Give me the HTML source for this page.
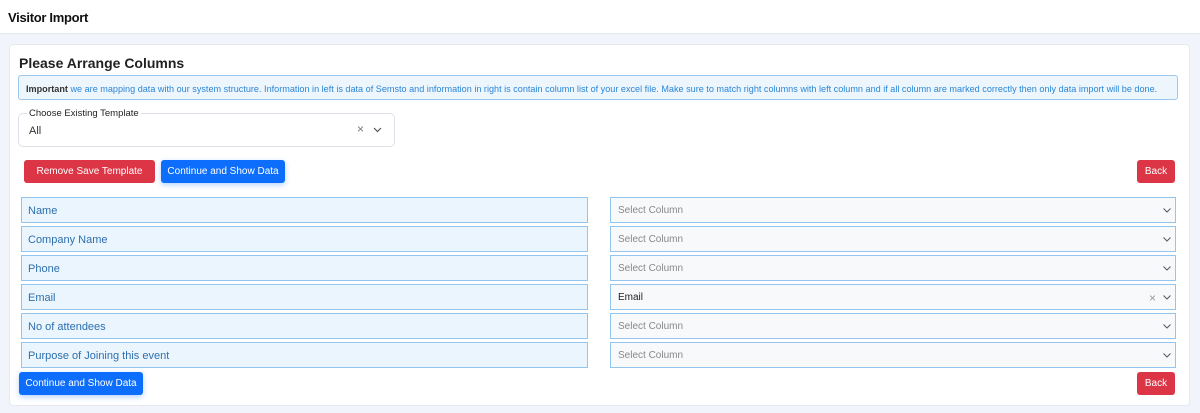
<!DOCTYPE html>
<html><head><style>
*{box-sizing:border-box;margin:0;padding:0}
body{width:1200px;height:413px;background:#f1f4fa;font-family:"Liberation Sans",sans-serif;position:relative;overflow:hidden}
.hdr{position:absolute;left:0;top:0;width:1200px;height:34px;background:#fff;border-bottom:1px solid #e3e8f0}
.hdr span{position:absolute;left:8px;top:10px;font-size:13px;font-weight:bold;color:#111;letter-spacing:-0.3px}
.card{position:absolute;left:9px;top:44px;width:1181px;height:362px;background:#fff;border:1px solid #e6eaf0;border-radius:4px}
.abs{position:absolute}
.title{left:19px;top:55px;font-size:14px;font-weight:bold;color:#222}
.alert{left:18px;top:75px;width:1160px;height:25px;background:#eef6fd;border:1px solid #9cc7ef;border-radius:3px;font-size:9.1px;color:#2a86d6;padding:8px 0 0 7px;white-space:nowrap;overflow:hidden}
.alert b{color:#333}
.tpl{left:18px;top:113px;width:377px;height:34px;border:1px solid #dde2e8;border-radius:5px}
.tpl .lab{position:absolute;left:8px;top:-6px;background:#fff;font-size:9.5px;color:#222;padding:0 2px}
.tpl .v{position:absolute;left:10px;top:11px;font-size:11px;color:#333}
.btn{position:absolute;height:23px;border-radius:3px;color:#fff;font-size:10px;text-align:center;line-height:23px}
.red{background:#dc3545}.blue{background:#0d6efd;box-shadow:0 2px 6px rgba(13,110,253,.3)}
.l{position:absolute;left:21px;width:567px;height:26px;background:#ebf5fe;border:1.5px solid #93c5ef;font-size:11px;color:#2d6fae;padding:7px 0 0 6px}
.r{position:absolute;left:610px;width:566px;height:26px;background:#f8f9fb;border:1.5px solid #93c5ef;font-size:10px;color:#888;padding:7px 0 0 7px}
.chev{position:absolute;right:4px;top:8px;width:8px;height:8px}
.x{position:absolute;right:19px;top:6px;font-size:12px;color:#999}
</style></head><body>
<div class="hdr"><span>Visitor Import</span></div>
<div class="card"></div>
<div class="abs title">Please Arrange Columns</div>
<div class="abs alert"><b>Important</b> we are mapping data with our system structure. Information in left is data of Semsto and information in right is contain column list of your excel file. Make sure to match right columns with left column and if all column are marked correctly then only data import will be done.</div>
<div class="abs tpl"><span class="lab">Choose Existing Template</span><span class="v">All</span>
<span style="position:absolute;right:30px;top:8px;font-size:12px;color:#777">×</span>
<svg style="position:absolute;right:12px;top:13px" width="9" height="6"><path d="M1 1L4.5 4.5L8 1" stroke="#555" fill="none" stroke-width="1.2"/></svg></div>
<div class="btn red" style="left:24px;top:160px;width:131px">Remove Save Template</div>
<div class="btn blue" style="left:161px;top:160px;width:124px">Continue and Show Data</div>
<div class="btn red" style="left:1137px;top:160px;width:38px">Back</div>

<div class="l" style="top:197px">Name</div>
<div class="l" style="top:226px">Company Name</div>
<div class="l" style="top:255px">Phone</div>
<div class="l" style="top:284px">Email</div>
<div class="l" style="top:313px">No of attendees</div>
<div class="l" style="top:342px">Purpose of Joining this event</div>

<div class="r" style="top:197px">Select Column<svg class="chev" viewBox="0 0 8 8"><path d="M0.5 2.5L4 6L7.5 2.5" stroke="#556" fill="none"/></svg></div>
<div class="r" style="top:226px">Select Column<svg class="chev" viewBox="0 0 8 8"><path d="M0.5 2.5L4 6L7.5 2.5" stroke="#556" fill="none"/></svg></div>
<div class="r" style="top:255px">Select Column<svg class="chev" viewBox="0 0 8 8"><path d="M0.5 2.5L4 6L7.5 2.5" stroke="#556" fill="none"/></svg></div>
<div class="r" style="top:284px;color:#222">Email<span class="x">×</span><svg class="chev" viewBox="0 0 8 8"><path d="M0.5 2.5L4 6L7.5 2.5" stroke="#556" fill="none"/></svg></div>
<div class="r" style="top:313px">Select Column<svg class="chev" viewBox="0 0 8 8"><path d="M0.5 2.5L4 6L7.5 2.5" stroke="#556" fill="none"/></svg></div>
<div class="r" style="top:342px">Select Column<svg class="chev" viewBox="0 0 8 8"><path d="M0.5 2.5L4 6L7.5 2.5" stroke="#556" fill="none"/></svg></div>

<div class="btn blue" style="left:19px;top:372px;width:124px">Continue and Show Data</div>
<div class="btn red" style="left:1137px;top:372px;width:38px">Back</div>
</body></html>
